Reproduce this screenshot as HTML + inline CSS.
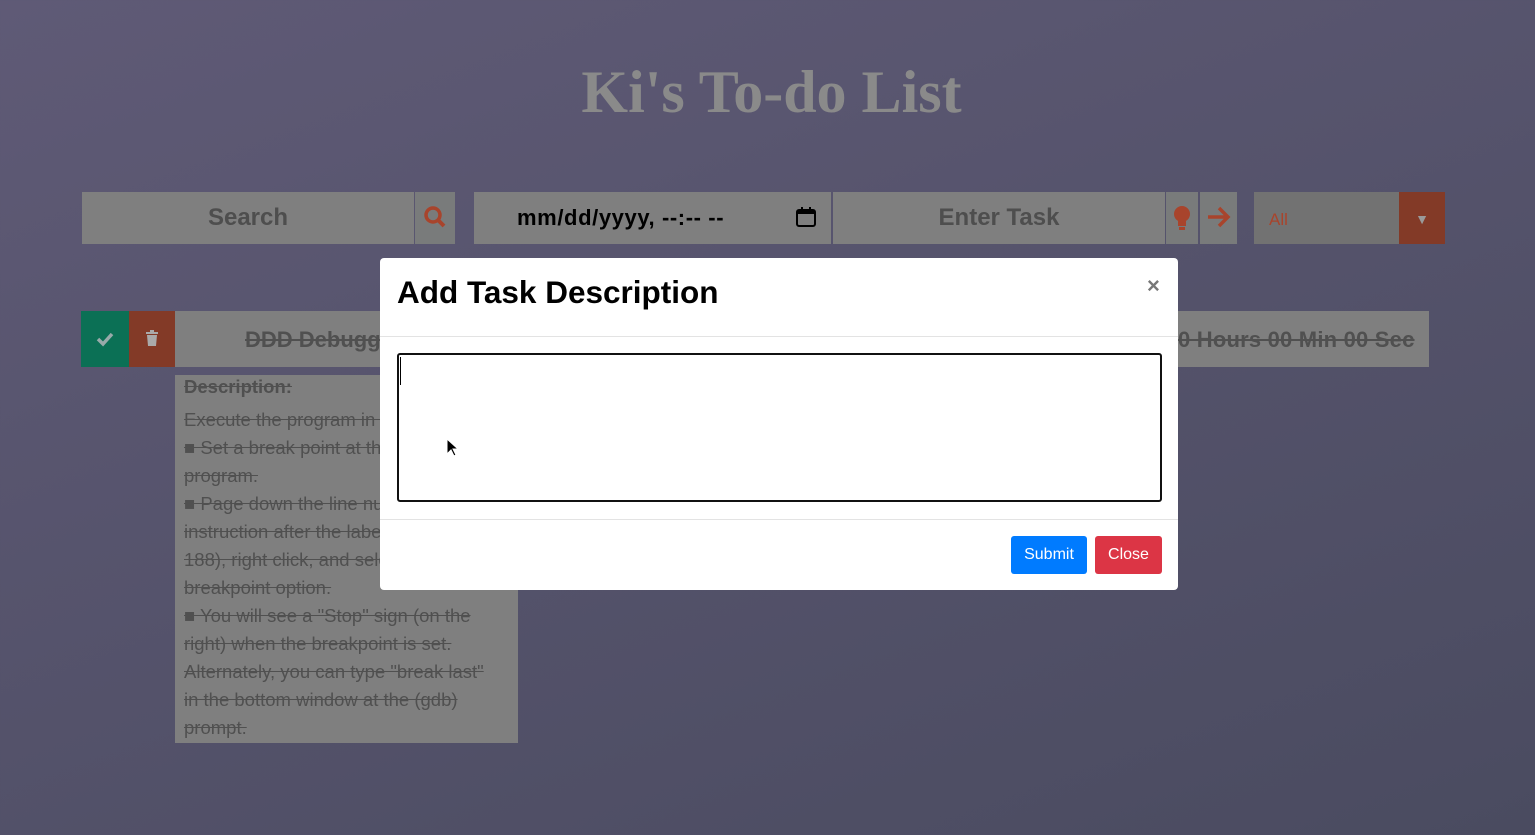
<!DOCTYPE html>
<html><head><style>
body{margin:0;width:1535px;height:835px;overflow:hidden;background:linear-gradient(160deg,#5f5a76 0%,#4a4b60 100%);font-family:"Liberation Sans",sans-serif;position:relative}
.a{position:absolute;box-sizing:border-box}
.g{background:#7f7f7f}
.ov{color:#505050}
.st{text-decoration:line-through}
</style></head><body>
<div class="a" style="left:0;width:1543px;top:58px;text-align:center;font:bold 60px 'Liberation Serif',serif;color:#8a8a8a">Ki's To-do List</div>

<div class="a g" style="left:82px;top:192px;width:332px;height:52px;text-align:center;line-height:52px;font-size:24px;font-weight:bold;color:#4e4e4e">Search</div>
<div class="a" style="left:415px;top:192px;width:40px;height:52px;background:#797b7b"><svg width="40" height="52"><circle cx="18" cy="23" r="7" stroke="#a8442c" stroke-width="3.5" fill="none"/><line x1="23" y1="28" x2="29" y2="34" stroke="#a8442c" stroke-width="4"/></svg></div>
<div class="a g" style="left:474px;top:192px;width:357px;height:52px;line-height:52px;font-size:22px;font-weight:bold;color:#000;padding-left:43px;letter-spacing:0.6px">mm/dd/yyyy, --:-- --</div>
<svg class="a" style="left:795px;top:206px" width="22" height="22"><rect x="2" y="4" width="18" height="16" rx="2" fill="none" stroke="#000" stroke-width="2"/><rect x="2" y="4" width="18" height="4" fill="#000"/><rect x="6" y="1" width="2" height="5" fill="#000"/><rect x="14" y="1" width="2" height="5" fill="#000"/></svg>
<div class="a g" style="left:833px;top:192px;width:332px;height:52px;text-align:center;line-height:52px;font-size:24px;font-weight:bold;color:#4e4e4e">Enter Task</div>
<div class="a" style="left:1166px;top:192px;width:32px;height:52px;background:#797b7b"><svg width="32" height="52"><circle cx="16" cy="22" r="8" fill="#a8442c"/><rect x="12" y="26" width="8" height="8" fill="#a8442c"/><rect x="13" y="35" width="6" height="3" fill="#a8442c"/></svg></div>
<div class="a" style="left:1200px;top:192px;width:37px;height:52px;background:#797b7b"><svg width="37" height="52"><path d="M8 25H28M19 16L28 25L19 34" stroke="#a8442c" stroke-width="3.5" fill="none"/></svg></div>
<div class="a" style="left:1254px;top:192px;width:145px;height:52px;background:#727272;color:#a8442c;font-size:17px;line-height:56px;padding-left:15px">All</div>
<div class="a" style="left:1399px;top:192px;width:46px;height:52px;background:#833a27;color:#9a9a9a;text-align:center;line-height:54px;font-size:14px">▼</div>

<div class="a" style="left:81px;top:311px;width:48px;height:56px;background:#0b7055"><svg width="48" height="56"><path d="M17 28L22 33L31 23" stroke="#9aa" stroke-width="3.5" fill="none"/></svg></div>
<div class="a" style="left:129px;top:311px;width:46px;height:56px;background:#833a27"><svg width="46" height="56"><rect x="17" y="21" width="12" height="2" fill="#aaa"/><rect x="21" y="19" width="4" height="2" fill="#aaa"/><path d="M18 24H28L27 35H19Z" fill="#aaa"/></svg></div>
<div class="a g st ov" style="left:175px;top:311px;width:1254px;height:56px;line-height:58px;font-size:22px;font-weight:bold;padding-left:70px">DDD Debugger</div>
<div class="a st ov" style="left:1178px;top:311px;line-height:58px;font-size:22px;font-weight:bold;letter-spacing:0.2px">0 Hours 00 Min 00 Sec</div>
<div class="a g st ov" style="left:175px;top:375px;width:343px;height:368px;padding:0 9px;font-size:18.5px;line-height:28px;white-space:nowrap">
<div style="font-weight:bold;margin-top:-2px;margin-bottom:5px">Description:</div>
Execute the program in the debugger.<br>■ Set a break point at the end of the<br>program.<br>■ Page down the line number of the<br>instruction after the label last (line<br>188), right click, and select the<br>breakpoint option.<br>■ You will see a "Stop" sign (on the<br>right) when the breakpoint is set.<br>Alternately, you can type "break last"<br>in the bottom window at the (gdb)<br>prompt.</div>

<div class="a" style="left:380px;top:258px;width:798px;height:332px;background:#fff;border-radius:4px">
<div class="a" style="left:17px;top:16px;font-size:31.5px;font-weight:bold;color:#000">Add Task Description</div>
<div class="a" style="left:767px;top:15px;font-size:22px;font-weight:bold;color:#777">×</div>
<div class="a" style="left:0;top:78px;width:798px;height:1px;background:#e3e3e3"></div>
<div class="a" style="left:17px;top:95px;width:765px;height:149px;border:2px solid #111;border-radius:3px"><div class="a" style="left:1px;top:2px;width:1px;height:28px;background:#000"></div></div>
<div class="a" style="left:0;top:261px;width:798px;height:1px;background:#e3e3e3"></div>
<div class="a" style="left:631px;top:278px;width:76px;height:38px;background:#007bff;color:#fff;border-radius:3px;text-align:center;line-height:38px;font-size:16px">Submit</div>
<div class="a" style="left:715px;top:278px;width:67px;height:38px;background:#dc3545;color:#fff;border-radius:3px;text-align:center;line-height:38px;font-size:16px">Close</div>
</div>
<svg class="a" style="left:446px;top:438px" width="14" height="20"><path d="M1 1V16L5 12L8 18L10 17L7 11H12Z" fill="#000" stroke="#fff" stroke-width="1"/></svg>
</body></html>
